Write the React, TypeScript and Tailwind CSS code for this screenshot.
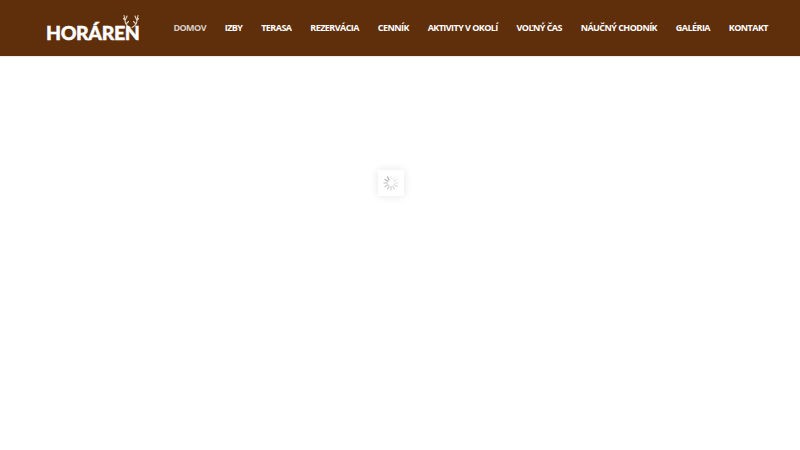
const links = [
  "DOMOV",
  "IZBY",
  "TERASA",
  "REZERVÁCIA",
  "CENNÍK",
  "AKTIVITY V OKOLÍ",
  "VOĽNÝ ČAS",
  "NÁUČNÝ CHODNÍK",
  "GALÉRIA",
  "KONTAKT",
];

const ticks = [0, 30, 60, 90, 120, 150, 180, 210, 240, 270, 300, 330];

const Antlers = () => (
  <svg
    width="16"
    height="13"
    viewBox="0 0 16 13"
    fill="none"
    stroke="#e3d3c0"
    strokeWidth="1.1"
    strokeLinecap="round"
    className="absolute left-[77px] top-[-3px]"
  >
    <path d="M7 12.5 C4 11 2 8 2 5 L1 0.5" />
    <path d="M2 5 L0.3 3.5" />
    <path d="M2.5 4.5 L4 1" />
    <path d="M3.5 8.5 L5.5 6.5" />
    <path d="M9 12.5 C12 11 14 8 14 5 L15 0.5" />
    <path d="M14 5 L15.7 3.5" />
    <path d="M13.5 4.5 L12 1" />
    <path d="M12.5 8.5 L10.5 6.5" />
  </svg>
);

const Spinner = () => (
  <svg width="16" height="16" viewBox="0 0 16 16">
    {ticks.map((deg, i) => (
      <line
        key={deg}
        x1="8"
        y1="1"
        x2="8"
        y2="4.5"
        stroke="#a0a0a0"
        strokeWidth="1.2"
        strokeLinecap="round"
        opacity={0.1 + (i / 12) * 0.8}
        transform={`rotate(${deg} 8 8)`}
      />
    ))}
  </svg>
);

export default function App() {
  return (
    <div className="h-[450px] w-[800px] overflow-hidden bg-white font-['Open_Sans',sans-serif]">
      <header className="flex h-[57px] items-center justify-between border-b border-[#f3ece2] bg-[#5f2e0b] pl-[46px] pr-[32px]">
        <div className="relative mt-[6px] h-[26px] w-[94px]">
          <Antlers />
          <span className="absolute left-0 top-[3px] font-['Lato',sans-serif] text-[19.5px] leading-[24px] font-black tracking-[-0.4px] whitespace-nowrap text-white [-webkit-text-stroke:0.4px_white]">
            HORÁREN
          </span>
        </div>
        <nav className="mb-[1px] flex items-center gap-[18.8px]">
          {links.map((link, index) => (
            <a
              key={link}
              href="#"
              className={
                index === 0
                  ? "text-[9px] font-bold tracking-[-0.55px] whitespace-nowrap text-[#d9cfc6]"
                  : "text-[9px] font-bold tracking-[-0.55px] whitespace-nowrap text-white"
              }
            >
              {link}
            </a>
          ))}
        </nav>
      </header>
      <main className="flex justify-center pt-[113px] pr-[18px]">
        <div className="flex h-[26px] w-[26px] items-center justify-center bg-white shadow-[0_0_10px_rgba(0,0,0,0.1)]">
          <Spinner />
        </div>
      </main>
    </div>
  );
}
